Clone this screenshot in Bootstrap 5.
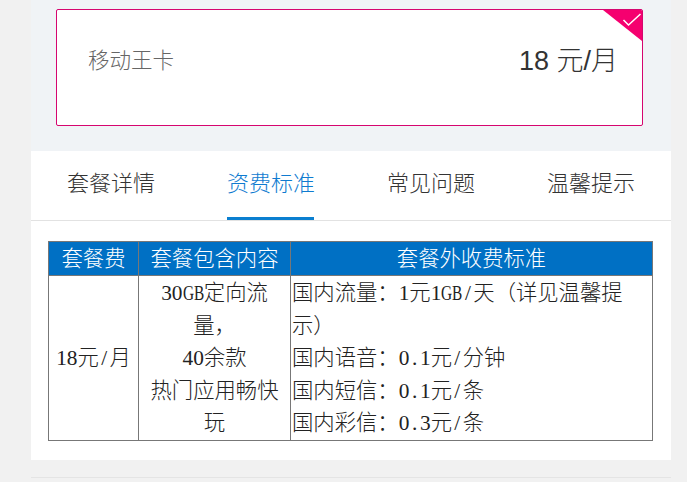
<!DOCTYPE html>
<html lang="zh">
<head>
<meta charset="utf-8">
<title>资费标准</title>
<link href="https://cdn.jsdelivr.net/npm/bootstrap@5.3.0/dist/css/bootstrap.min.css" rel="stylesheet">
<style>
html,body{height:482px;overflow:hidden}
body{background:#f1f1f1;font-family:"Liberation Sans","Noto Sans CJK SC",sans-serif}
.shell{width:640px;margin-left:31px}
.top-area{background:#f0f3f6;padding:9px 28px 25px 25px;height:151px}
.plan-box{height:117px;width:587px;border:1px solid #d6056f;border-radius:2px;background:#fff;padding:1px 24px 14px 31px;position:relative;overflow:hidden}
.plan-name{font-size:21.5px;color:#666;font-weight:300}
.plan-price{font-size:27px;color:#333;font-weight:300}
.corner{position:absolute;top:0;right:0;display:block}
.tab-panel{background:#fff;height:309px}
.tab-row{height:70px;border-bottom:1px solid #e2e2e2;padding-left:36px;gap:73px}
.tab-item{font-size:22px;color:#333;height:69px;width:87px;line-height:65px;white-space:nowrap;text-decoration:none;font-weight:300}
.tab-item.on{color:#0f7bd0;border-bottom:3px solid #0a7fd0}
.tab-body{padding:20px 18px 0 17px}
.fee{width:605px;table-layout:fixed;border-collapse:collapse;font-family:"Liberation Serif","Noto Sans CJK SC",serif;font-size:21.33px;line-height:32.5px;color:#222;font-weight:300}
.fee th,.fee td{border:1px solid #777;padding:0}
.fee th{background:#0070c4;color:#fff;font-weight:300;text-align:center;height:33px;line-height:32px;padding-top:1px}
.fee td{padding:1px 1px 0;background:#fff}
.half{display:inline-block;width:10.67px;text-align:center;line-height:1}
.gb{display:inline-block;width:21.33px;line-height:1;white-space:nowrap;transform:scaleX(.72);transform-origin:left center}
.foot-line{height:1px;background:#e4e4e4;margin-top:17px}
</style>
</head>
<body>
<div class="shell">
  <div class="top-area">
    <div class="plan-box d-flex align-items-center justify-content-between">
      <span class="plan-name">移动王卡</span>
      <span class="plan-price">18 元/月</span>
      <svg class="corner" width="39" height="31" viewBox="0 0 39 31" aria-hidden="true">
        <polygon points="0,0 39,0 39,31" fill="#f5006f"/>
        <path d="M20.5 10l5 5 12-11" fill="none" stroke="#fff" stroke-width="1.5"/>
      </svg>
    </div>
  </div>
  <div class="tab-panel">
    <nav class="tab-row d-flex">
      <a class="tab-item" href="#">套餐详情</a>
      <a class="tab-item on" href="#">资费标准</a>
      <a class="tab-item" href="#">常见问题</a>
      <a class="tab-item" href="#">温馨提示</a>
    </nav>
    <div class="tab-body">
      <table class="fee">
        <colgroup><col style="width:90px"><col style="width:152px"><col></colgroup>
        <thead>
          <tr><th>套餐费</th><th>套餐包含内容</th><th>套餐外收费标准</th></tr>
        </thead>
        <tbody>
          <tr>
            <td class="text-center">18元<span class="half">/</span>月</td>
            <td class="text-center">30<span class="gb">GB</span>定向流<br>量，<br>40余款<br>热门应用畅快<br>玩</td>
            <td>国内流量：1元1<span class="gb">GB</span><span class="half">/</span>天（详见温馨提<br>示）<br>国内语音：0<span class="half">.</span>1元<span class="half">/</span>分钟<br>国内短信：0<span class="half">.</span>1元<span class="half">/</span>条<br>国内彩信：0<span class="half">.</span>3元<span class="half">/</span>条</td>
          </tr>
        </tbody>
      </table>
    </div>
  </div>
  <div class="foot-line"></div>
</div>
<script src="https://cdn.jsdelivr.net/npm/bootstrap@5.3.0/dist/js/bootstrap.bundle.min.js"></script>
</body>
</html>
